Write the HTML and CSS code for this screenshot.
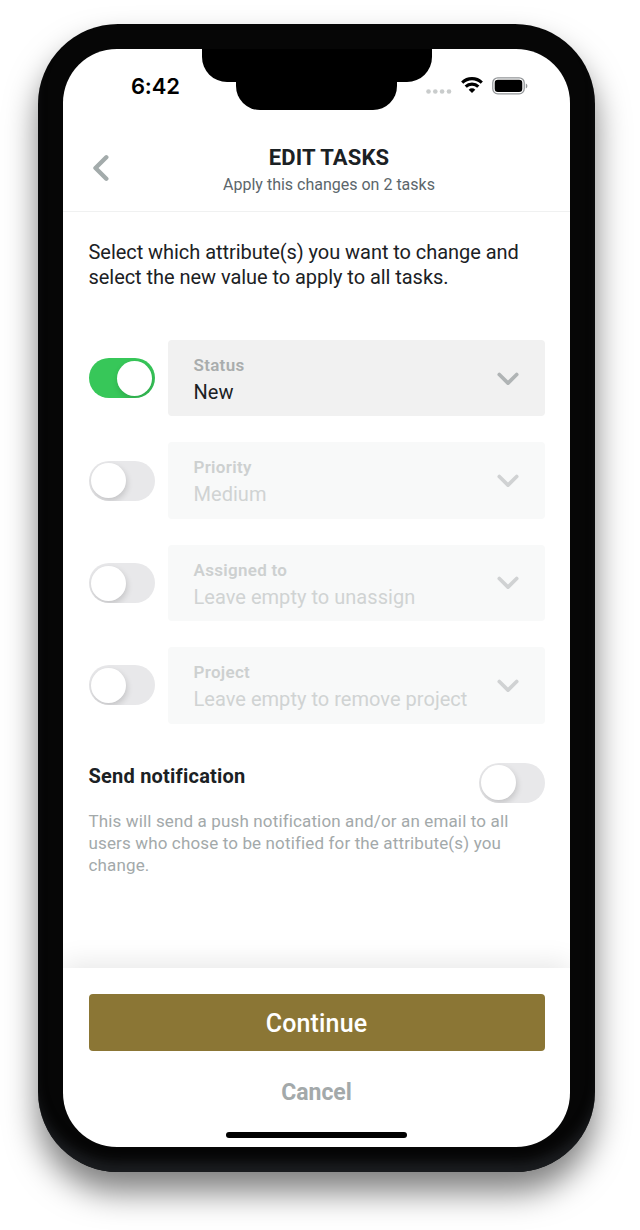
FILE: index.html
```html
<!DOCTYPE html>
<html lang="en">
<head>
    <meta charset="UTF-8">
    <meta name="viewport" content="width=device-width, initial-scale=1.0">
    <title>Edit Tasks</title>
    <link rel="stylesheet" href="styles.css">
</head>
<body>
    <div class="phone">
        <div class="notch"></div>
        <div class="notch-lower"></div>
        <div class="screen">
            <div class="status-bar">
                <span class="time">6:42</span>
                <div class="status-icons">
                    <svg width="26" height="5" viewBox="0 0 26 5" fill="#c9cccc">
                        <circle cx="2.5" cy="2.5" r="2.3"/>
                        <circle cx="9.3" cy="2.5" r="2.3"/>
                        <circle cx="16.1" cy="2.5" r="2.3"/>
                        <circle cx="23" cy="2.5" r="2.3"/>
                    </svg>
                    <svg class="wifi" width="22" height="16" viewBox="0 0 22 16" fill="none" stroke="#000" stroke-width="3.1">
                        <path d="M1.2 5.6a14 14 0 0 1 19.6 0"/>
                        <path d="M4.700 9.700a8.900 8.900 0 0 1 12.600 0"/>
                        <path d="M11 16L7.700 12.700a4.700 4.700 0 0 1 6.600 0z" fill="#000" stroke="none"/>
                    </svg>
                    <svg class="battery" width="36" height="18" viewBox="0 0 36 18">
                        <rect x="0.8" y="0.8" width="31.4" height="16" rx="5" fill="none" stroke="#929598" stroke-width="1.3"/>
                        <rect x="2.7" y="2.7" width="27.6" height="12.2" rx="3.2" fill="#000"/>
                        <path d="M33.8 6.4v5c2.1-.9 2.1-4.1 0-5z" fill="#929598"/>
                    </svg>
                </div>
            </div>

            <div class="header">
                <svg class="back" width="18" height="28" viewBox="0 0 18 28" fill="none" stroke="#a3abab" stroke-width="4.4" stroke-linecap="round" stroke-linejoin="round">
                    <path d="M15.300 3.300L4.500 14l10.800 10.700"/>
                </svg>
                <div class="titles">
                    <div class="title">EDIT TASKS</div>
                    <div class="subtitle">Apply this changes on 2 tasks</div>
                </div>
            </div>

            <div class="content">
                <p class="intro">Select which attribute(s) you want to change and<br>select the new value to apply to all tasks.</p>

                <div class="row">
                    <div class="toggle on"></div>
                    <div class="field active">
                        <div>
                            <div class="label">Status</div>
                            <div class="value">New</div>
                        </div>
                        <svg class="chevron" width="24" height="16" viewBox="0 0 24 16"><path d="M3.300 3.500l8.700 8.600 8.700-8.600"/></svg>
                    </div>
                </div>
                <div class="row">
                    <div class="toggle"></div>
                    <div class="field">
                        <div>
                            <div class="label">Priority</div>
                            <div class="value">Medium</div>
                        </div>
                        <svg class="chevron" width="24" height="16" viewBox="0 0 24 16"><path d="M3.300 3.500l8.700 8.600 8.700-8.600"/></svg>
                    </div>
                </div>
                <div class="row">
                    <div class="toggle"></div>
                    <div class="field">
                        <div>
                            <div class="label">Assigned to</div>
                            <div class="value">Leave empty to unassign</div>
                        </div>
                        <svg class="chevron" width="24" height="16" viewBox="0 0 24 16"><path d="M3.300 3.500l8.700 8.600 8.700-8.600"/></svg>
                    </div>
                </div>
                <div class="row">
                    <div class="toggle"></div>
                    <div class="field">
                        <div>
                            <div class="label">Project</div>
                            <div class="value">Leave empty to remove project</div>
                        </div>
                        <svg class="chevron" width="24" height="16" viewBox="0 0 24 16"><path d="M3.300 3.500l8.700 8.600 8.700-8.600"/></svg>
                    </div>
                </div>

                <div class="notify">
                    <div class="notify-title">Send notification</div>
                    <div class="toggle"></div>
                </div>
                <p class="hint">This will send a push notification and/or an email to all<br>users who chose to be notified for the attribute(s) you<br>change.</p>
            </div>

            <div class="footer">
                <button class="btn continue">Continue</button>
                <button class="btn cancel">Cancel</button>
                <div class="home-indicator"></div>
            </div>
        </div>
    </div>
</body>
</html>
```
FILE: styles.css
```css
* {
    box-sizing: border-box;
}

body {
    min-height: 1230px;
    margin: 0;
    padding: 24px 0 0 38px;
    background-color: #fff;
    font-family: Roboto, "Liberation Sans", sans-serif;
    color: #1b2124;
}

/* Device frame */
.phone {
    position: relative;
    width: 557px;
    height: 1148px;
    padding: 25px;
    border-radius: 80px;
    background-color: #060606;
    box-shadow: 0 20px 32px rgba(0, 0, 0, 0.5), inset 0 -14px 12px -4px #1b1d20;
}

.screen {
    display: flex;
    flex-direction: column;
    height: 1098px;
    border-radius: 54px;
    background-color: #fff;
    overflow: hidden;
}

.notch,
.notch-lower {
    position: absolute;
    background-color: #000;
}

.notch {
    top: 25px;
    left: 163.5px;
    width: 230.5px;
    height: 33px;
    border-radius: 0 0 25px 25px;
}

.notch-lower {
    top: 40px;
    left: 198px;
    width: 161px;
    height: 46px;
    border-radius: 0 0 24px 24px;
}

/* Status bar */
.status-bar {
    display: flex;
    justify-content: space-between;
    height: 76px;
    padding: 24px 42px 0 68px;
}

.time {
    font-family: Inter, sans-serif;
    font-size: 22px;
    font-weight: 600;
    line-height: 27px;
    letter-spacing: -0.2px;
    color: #000;
}

.status-icons {
    display: flex;
    align-items: flex-start;
    padding-top: 4px;
}

.status-icons svg:first-child {
    margin-top: 12px;
}

.wifi {
    margin-left: 9px;
}

.battery {
    margin-left: 9px;
}

/* Header */
.header {
    display: flex;
    height: 87px;
    padding: 0 25px 0 28px;
    border-bottom: 1px solid #f0f1f1;
}

.back {
    margin-top: 29px;
}

.titles {
    flex: 1;
    padding: 19px 0 0 4px;
    text-align: center;
    white-space: nowrap;
}

.title {
    font-size: 22px;
    font-weight: 700;
    line-height: 28px;
    letter-spacing: 0.15px;
}

.subtitle {
    font-size: 16px;
    line-height: 25px;
    color: #5b666b;
}

/* Form */
.content {
    flex: 1;
    padding: 28px 25.5px 0;
}

.intro {
    margin: 0 0 49.5px;
    font-size: 20px;
    line-height: 25.3px;
    letter-spacing: -0.05px;
    white-space: nowrap;
}

.row {
    display: flex;
    align-items: center;
    gap: 13px;
    margin-bottom: 26px;
}

.toggle {
    flex: none;
    width: 66px;
    height: 40px;
    padding: 2.5px;
    border-radius: 20px;
    background-color: #e8e8ea;
    overflow: hidden;
}

.toggle::before {
    content: "";
    display: block;
    width: 35px;
    height: 35px;
    border-radius: 50%;
    background-color: #fff;
    box-shadow: 1px 3px 6px rgba(0, 0, 0, 0.16);
}

.toggle.on {
    padding-left: 28.5px;
    background-color: #37c759;
}

.field {
    flex: 1;
    display: flex;
    justify-content: space-between;
    height: 76.4px;
    padding: 12px 25px 0 26px;
    border-radius: 4px;
    background-color: #f8f9f9;
    color: #d0d3d3;
    white-space: nowrap;
}

.field.active {
    background-color: #f1f1f1;
    color: #1b2124;
}

.label {
    font-size: 17px;
    font-weight: 600;
    line-height: 26px;
    letter-spacing: 0.3px;
    color: #cdd0d0;
}

.active .label {
    color: #a9adad;
}

.value {
    font-size: 20px;
    line-height: 29px;
    letter-spacing: 0.03px;
}

.chevron {
    margin-top: 18.5px;
    fill: none;
    stroke: #d0d2d3;
    stroke-width: 3.7;
    stroke-linecap: round;
    stroke-linejoin: round;
}

.active .chevron {
    stroke: #b0b4b5;
}

.notify {
    display: flex;
    justify-content: space-between;
    margin-top: 39px;
}

.notify-title {
    font-size: 20px;
    font-weight: 700;
    line-height: 27px;
    letter-spacing: 0.22px;
}

.hint {
    margin: 8.5px 0 0;
    font-size: 17px;
    line-height: 21.8px;
    letter-spacing: 0.14px;
    color: #a3a9aa;
    white-space: nowrap;
}

/* Bottom actions */
.footer {
    display: flex;
    flex-direction: column;
    align-items: center;
    height: 179px;
    padding: 26px 25.5px 0;
    box-shadow: 0 -4px 26px rgba(0, 0, 0, 0.1);
}

.btn {
    width: 100%;
    padding: 0;
    border: none;
    background: none;
    font-family: inherit;
    cursor: pointer;
}

.continue {
    height: 57px;
    border-radius: 4px;
    background-color: #8b7635;
    color: #fff;
    font-size: 25px;
    font-weight: 500;
    line-height: 60px;
    letter-spacing: 0.15px;
}

.cancel {
    height: 40px;
    margin-top: 21px;
    color: #a3a9aa;
    font-size: 23px;
    font-weight: 700;
}

.home-indicator {
    width: 181px;
    height: 6.5px;
    margin-top: 19.5px;
    border-radius: 4px;
    background-color: #000;
}
```
